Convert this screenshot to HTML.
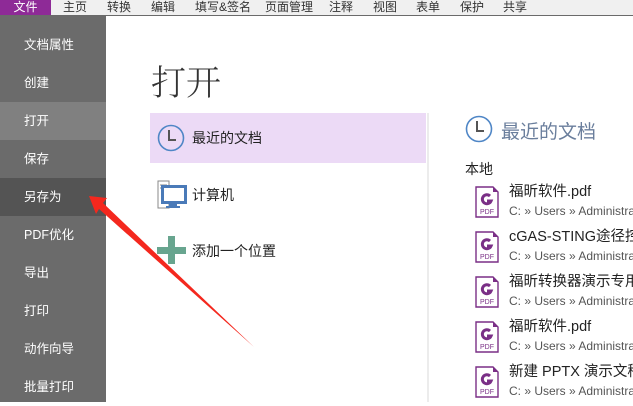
<!DOCTYPE html>
<html><head><meta charset="utf-8"><style>
*{margin:0;padding:0;box-sizing:border-box}
body{width:633px;height:402px;overflow:hidden;background:#fff;font-family:"Liberation Sans","Noto Sans CJK SC",sans-serif;position:relative}
.top{position:absolute;left:0;top:0;width:633px;height:16px;background:#f0f0f0;border-bottom:1px solid #6a6a6a;font-size:12px;color:#333}
.top span{position:absolute;top:-1px;line-height:16px}
.file{position:absolute;left:0;top:0;width:51px;height:15px;background:#8e2a97;color:#fff;font-size:12px;line-height:14px;text-align:center}
.side{position:absolute;left:0;top:16px;width:106px;height:386px;background:#6b6b6b}
.side div{position:absolute;left:0;width:106px;height:38px;color:#fff;font-size:12.5px;line-height:38px;padding-left:24px}
.t{position:absolute;white-space:nowrap}
.fn{font-size:14.5px;color:#222}
.fp{font-size:12px;color:#555}
</style></head><body>
<div class="top">
<div class="file">文件</div>
<span style="left:63px">主页</span><span style="left:107px">转换</span><span style="left:151px">编辑</span><span style="left:195px">填写&amp;签名</span><span style="left:265px">页面管理</span><span style="left:329px">注释</span><span style="left:373px">视图</span><span style="left:416px">表单</span><span style="left:460px">保护</span><span style="left:503px">共享</span>
</div>
<div class="side">
<div style="top:10px">文档属性</div>
<div style="top:48px">创建</div>
<div style="top:86px;background:#808080">打开</div>
<div style="top:124px">保存</div>
<div style="top:162px;background:#545454">另存为</div>
<div style="top:200px">PDF优化</div>
<div style="top:238px">导出</div>
<div style="top:276px">打印</div>
<div style="top:314px">动作向导</div>
<div style="top:352px">批量打印</div>
</div>
<div class="t" style="left:151px;top:56px;font-size:35px;color:#333;font-family:'Noto Serif CJK SC',serif;font-weight:300">打开</div>
<div style="position:absolute;left:150px;top:113px;width:276px;height:50px;background:#ecdaf6"></div>
<div style="position:absolute;left:427px;top:113px;width:2px;height:289px;background:#ececec"></div>
<svg style="position:absolute;left:157px;top:124px" width="28" height="28"><circle cx="14" cy="14" r="12.5" fill="none" stroke="#4f86c6" stroke-width="1.6"/><path d="M12 6v10h7" fill="none" stroke="#555" stroke-width="2"/></svg>
<div class="t" style="left:192px;top:128px;font-size:14px;color:#222">最近的文档</div>
<svg style="position:absolute;left:157px;top:180px" width="30" height="29"><rect x="1" y="1" width="11" height="27" fill="#fff" stroke="#888"/><path d="M3 5h7M3 8h7" stroke="#888"/><rect x="5.5" y="6.5" width="23" height="16" fill="#fff" stroke="#4a7ab8" stroke-width="3"/><rect x="12" y="23" width="8" height="3" fill="#4a7ab8"/><rect x="9" y="26" width="14" height="2" fill="#4a7ab8"/></svg>
<div class="t" style="left:192px;top:185px;font-size:14px;color:#222">计算机</div>
<svg style="position:absolute;left:157px;top:236px" width="29" height="28"><rect x="11" y="0" width="7" height="28" fill="#68a58f"/><rect x="0" y="11" width="29" height="7" fill="#68a58f"/></svg>
<div class="t" style="left:192px;top:241px;font-size:14px;color:#222">添加一个位置</div>
<svg style="position:absolute;left:465px;top:115px" width="28" height="28"><circle cx="14" cy="14" r="12.5" fill="none" stroke="#4f86c6" stroke-width="1.6"/><path d="M12 6v10h7" fill="none" stroke="#555" stroke-width="2"/></svg>
<div class="t" style="left:501px;top:117px;font-size:19px;color:#6a7e9c">最近的文档</div>
<div class="t" style="left:465px;top:159px;font-size:14px;color:#222">本地</div>
<svg width="0" height="0" style="position:absolute"><defs><g id="pdf"><path d="M1 1h17l5 5v25H1z" fill="#fff" stroke="#7a2f86" stroke-width="1.4"/><path d="M18 1l5 5h-5z" fill="#7a2f86"/><path d="M15 10a4.5 4.5 0 1 0 1 5h-4" fill="none" stroke="#7a2f86" stroke-width="3"/><text x="5" y="28" font-size="7" fill="#7a2f86" font-family="Liberation Sans">PDF</text></g></defs></svg>
<svg style="position:absolute;left:475px;top:186px" width="26" height="32"><use href="#pdf"/></svg>
<div class="t fn" style="left:509px;top:180px">福昕软件.pdf</div><div class="t fp" style="left:509px;top:204px">C: » Users » Administra</div>
<svg style="position:absolute;left:475px;top:231px" width="26" height="32"><use href="#pdf"/></svg>
<div class="t fn" style="left:509px;top:225px">cGAS-STING途径控制</div><div class="t fp" style="left:509px;top:249px">C: » Users » Administra</div>
<svg style="position:absolute;left:475px;top:276px" width="26" height="32"><use href="#pdf"/></svg>
<div class="t fn" style="left:509px;top:270px">福昕转换器演示专用</div><div class="t fp" style="left:509px;top:294px">C: » Users » Administra</div>
<svg style="position:absolute;left:475px;top:321px" width="26" height="32"><use href="#pdf"/></svg>
<div class="t fn" style="left:509px;top:315px">福昕软件.pdf</div><div class="t fp" style="left:509px;top:339px">C: » Users » Administra</div>
<svg style="position:absolute;left:475px;top:366px" width="26" height="32"><use href="#pdf"/></svg>
<div class="t fn" style="left:509px;top:360px">新建 PPTX 演示文稿</div><div class="t fp" style="left:509px;top:384px">C: » Users » Administra</div>
<svg style="position:absolute;left:0;top:0" width="633" height="402"><path d="M89 196L107 198L103 203L254 347L99 209L96 214Z" fill="#f4281e"/></svg>
</body></html>
